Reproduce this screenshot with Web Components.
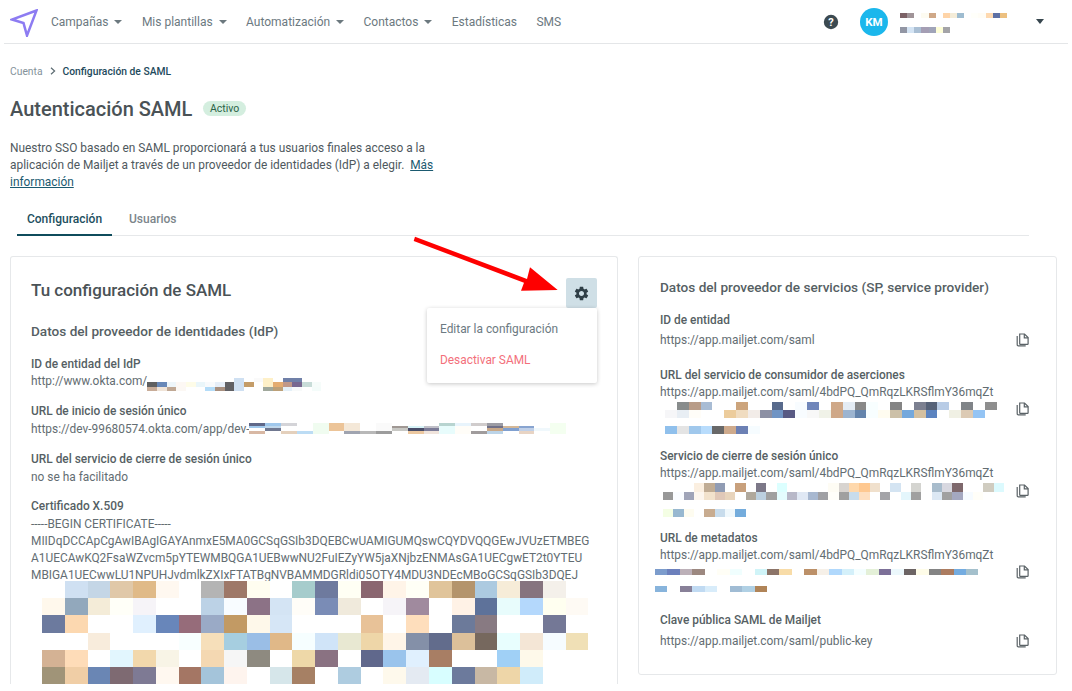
<!DOCTYPE html>
<html lang="es"><head><meta charset="utf-8"><title>SAML</title>
<style>
html,body{margin:0;padding:0;background:#fff;}
body{width:1072px;height:691px;overflow:hidden;font-family:Roboto,"Liberation Sans",sans-serif;}
app-shell{width:1064px;margin-left:4px;}
</style></head><body>
<app-shell>
  <top-nav></top-nav>
  <page-head></page-head>
  <config-card slot="left"></config-card>
  <provider-card slot="right"></provider-card>
</app-shell>
<script>
function def(name,css,html){
  customElements.define(name,class extends HTMLElement{
    connectedCallback(){
      if(this.shadowRoot)return;
      const r=this.attachShadow({mode:'open'});
      r.innerHTML='<style>'+css+'</style>'+(typeof html==='function'?html(this):html);
    }
  });
}
/* Redaction mosaic: rows of colour cells */
customElements.define('pixel-strip',class extends HTMLElement{
  connectedCallback(){
    if(this.shadowRoot)return;
    const r=this.attachShadow({mode:'open'});
    const cw=this.getAttribute('cw'),rh=this.getAttribute('rh');
    const rows=this.getAttribute('data-rows').trim().split('|').map(s=>s.trim().split(/\s+/));
    const n=Math.max(...rows.map(x=>x.length));
    let cells='';
    rows.forEach(row=>{for(let i=0;i<n;i++){const c=row[i]||'fff';cells+='<i style="background:#'+c+'"></i>';}});
    r.innerHTML='<style>:host{display:grid;flex:none;width:max-content;grid-template-columns:repeat('+n+','+cw+'px);grid-auto-rows:'+rh+'px}i{display:block}</style>'+cells;
  }
});
def('copy-icon',':host{display:block;width:14px;height:14px;flex:none}svg{display:block}',
 `<svg width="14" height="14" viewBox="0 0 14 14" fill="none" stroke="#5a6266" stroke-width="1.2"><path d="M1.2 3v8.8a1.1 1.1 0 0 0 1.1 1.1h7.4"/><path d="M3.7 1h4.8l3.6 3.6v6.2a.6.6 0 0 1-.6.6H4.3a.6.6 0 0 1-.6-.6z"/><path d="M8.3 1v3.8h3.8"/></svg>`);
def('nav-item',`:host{display:inline-flex;align-items:center;gap:6px;font-size:12px;color:#6c797f}
 .c{width:0;height:0;border:4px solid transparent;border-top:4.5px solid #6c797f;border-bottom:0}`,
 el=>'<slot></slot>'+(el.hasAttribute('caret')?'<span class="c"></span>':''));
def('top-nav',`:host{display:flex;align-items:center;height:43px;border-bottom:1px solid #e4e6e8;position:relative}
 .logo{margin:2px 0 0 6px;width:28px;height:28px;display:block;flex:none}
 nav{display:flex;margin-left:13px;gap:19.4px}
 .sp{flex:1}
 .help{display:block;margin-right:21px}
 .av{width:28px;height:28px;border-radius:50%;background:#1bb7ec;color:#fff;font:700 11.5px Roboto,sans-serif;display:flex;align-items:center;justify-content:center;margin-right:12px}
 .user{display:flex;flex-direction:column;gap:9px;width:136px;margin-top:3px}
 .car{width:0;height:0;border:4px solid transparent;border-top:5px solid #37464e;border-bottom:0;margin-right:24px}`,
 `<svg class="logo" viewBox="0 0 28 28" fill="none" stroke="#8d7cf2" stroke-width="2.5" stroke-linejoin="miter" stroke-miterlimit="8"><path d="M26.5 1.5 2 10.5l11.5 3.6L17 26.5z"/></svg>
 <nav><nav-item caret>Campañas</nav-item><nav-item caret>Mis plantillas</nav-item><nav-item caret>Automatización</nav-item><nav-item caret>Contactos</nav-item><nav-item>Estadísticas</nav-item><nav-item>SMS</nav-item></nav>
 <span class="sp"></span>
 <svg class="help" width="16" height="16" viewBox="0 0 16 16"><circle cx="8" cy="8" r="7.2" fill="#3c4a51"/><text x="8" y="12" text-anchor="middle" font-family="Roboto,sans-serif" font-weight="700" font-size="11" fill="#fff">?</text></svg>
 <div class="av">KM</div>
 <div class="user">
 <pixel-strip cw="7.13" rh="5" data-rows="7c6266 a09498 fff fdfbf1 cfa888 fff fed4a8 f4ecd8 9ebcd0 fff fffffa fffdf6 fed9b0 5e70a4 ecc080"></pixel-strip>
 <pixel-strip cw="7.13" rh="6" data-rows="9296a4 d4e4f4 aabfd4 a49eb4 a0a4b8 fefed8 a4a4a8"></pixel-strip>
 </div>
 <span class="car"></span>`);
def('page-head',`:host{display:block;padding:0 0 0 6px}
 .bc{display:flex;align-items:center;gap:7px;font-size:10.3px;margin-top:20px;height:14px;color:#84929a}
 .bc b{font-weight:500;color:#1d4a5c}
 .bc svg{display:block}
 h1{display:flex;align-items:center;margin:17px 0 0;height:28px;font-size:20px;font-weight:500;color:#4a5256}
 .badge{margin:-1px 0 0 11px;background:#d4eedf;color:#2b6347;font-size:10.5px;font-weight:400;border-radius:8px;padding:0 6.5px;height:15px;line-height:15px}
 p{margin:16.5px 0 0;width:440px;font-size:11.9px;line-height:17px;color:#4f595e}
 a{color:#1b5a70;text-decoration:underline;display:inline-block}
 .tabs{display:flex;margin:13.5px 0 0 7px;width:1012px;border-bottom:1px solid #e6e8ea;height:31px;font-size:12px}
 .t{padding:0 10px;height:30px;display:flex;align-items:center;justify-content:center;color:#7c868b;font-weight:500;margin-right:7px}
 .t.on{color:#1d4f60;border-bottom:2px solid #0f4c5c;width:75px}`,
 `<div class="bc"><span>Cuenta</span><svg width="6" height="8" viewBox="0 0 6 8" fill="none" stroke="#5c6b72" stroke-width="1.2"><path d="M1 .8 4.6 4 1 7.2"/></svg><b>Configuración de SAML</b></div>
 <h1>Autenticación SAML<span class="badge">Activo</span></h1>
 <p>Nuestro SSO basado en SAML proporcionará a tus usuarios finales acceso a la aplicación de Mailjet a través de un proveedor de identidades (IdP) a elegir.&nbsp; <a>Más</a> <a>información</a></p>
 <div class="tabs"><div class="t on">Configuración</div><div class="t">Usuarios</div></div>`);
def('info-field',`:host{display:block;font-size:11.9px;line-height:17px;color:#636d72}
 .l{font-weight:500;color:#565f64;display:block}`,
 el=>`<span class="l">${el.getAttribute('label')}</span><slot></slot>`);
def('config-card',`:host{display:block;position:relative;box-sizing:border-box;width:608px;height:428px;border:1px solid #e6e8ea;border-bottom:0;border-radius:3px 3px 0 0;padding:21px 20px 0 20px;flex:none}
 .head{display:flex;justify-content:space-between;align-items:flex-start;height:30px}
 h2{margin:0;font-size:17px;line-height:24px;font-weight:500;color:#4a5256}
 .gear{width:31px;height:30px;background:#cfdfe6;border-radius:2px;display:flex;align-items:center;justify-content:center}
 h3{margin:14px 0 0;font-size:13.6px;line-height:18px;font-weight:500;color:#565f64}
 h3+info-field{margin-top:16px}
 .row{display:flex;height:17px}
 .cert{white-space:pre;margin-top:1px}
 .menu{position:absolute;left:416px;top:51px;width:170px;height:75px;background:#fff;border-radius:2px;box-shadow:0 1px 4px rgba(0,0,0,.22);z-index:2;font-size:11.9px;box-sizing:border-box;padding:13px;display:flex;flex-direction:column;gap:14px}
 .menu div{line-height:17px;color:#6c7a82}
 .menu .d{color:#f3707b}
 .mosaic{margin:-3px 0 0 11px}`,
 `<div class="head"><h2>Tu configuración de SAML</h2>
  <div class="gear"><svg width="17" height="17" viewBox="0 0 24 24" fill="#2f3e46"><path d="M19.14 12.94c.04-.3.06-.61.06-.94 0-.32-.02-.64-.07-.94l2.03-1.58c.18-.14.23-.41.12-.61l-1.92-3.32c-.12-.22-.37-.29-.59-.22l-2.39.96c-.5-.38-1.03-.7-1.62-.94l-.36-2.54c-.04-.24-.24-.41-.48-.41h-3.84c-.24 0-.43.17-.47.41l-.36 2.54c-.59.24-1.13.57-1.62.94l-2.39-.96c-.22-.08-.47 0-.59.22L2.74 8.87c-.12.21-.08.47.12.61l2.03 1.58c-.05.3-.09.63-.09.94s.02.64.07.94l-2.03 1.58c-.18.14-.23.41-.12.61l1.92 3.32c.12.22.37.29.59.22l2.39-.96c.5.38 1.03.7 1.62.94l.36 2.54c.05.24.24.41.48.41h3.84c.24 0 .44-.17.47-.41l.36-2.54c.59-.24 1.13-.56 1.62-.94l2.39.96c.22.08.47 0 .59-.22l1.92-3.32c.12-.22.07-.47-.12-.61l-2.01-1.58zM12 15.6c-1.98 0-3.6-1.62-3.6-3.6s1.62-3.6 3.6-3.6 3.6 1.62 3.6 3.6-1.62 3.6-3.6 3.6z"/></svg></div></div>
 <div class="menu"><div>Editar la configuración</div><div class="d">Desactivar SAML</div></div>
 <h3>Datos del proveedor de identidades (IdP)</h3>
 <info-field label="ID de entidad del IdP"><div class="row">http://www.okta.com/<pixel-strip cw="9.68" rh="4.3" style="margin-top:5px" data-rows="fff fff fff fff fff fff fff fff fff cfe0f2 fff fafafa fef0c8 fff 7080a8 7080a8 fff fff|606060 6888b8 eef6fa fdf8f4 fefce8 eaf6fa f8fafc e6eef8 606064 cfe0f2 c49c68 fff fef0c8 e4ac70 c09888 786890 c8dcd8 f6fcfa|c8ac98 f0e4d8 c0a894 fcf8f4 fff fff b4dcf8 a89080 606064 cfe0f2 fff fff a0a89c bca078 e4f0f8 f8fafa fff f4fcfa"></pixel-strip></div></info-field>
 <info-field label="URL de inicio de sesión único" style="margin-top:13px"><div class="row" style="margin-top:1px">https://dev-99680574.okta.com/app/dev-<pixel-strip cw="15.83" rh="2.7" style="margin-top:2px" data-rows="606888 a0c8ec d4d4d8 fff f0fcf0 ecc498 f4e8d8 fff fafafa fff fff fff b8d4d0 e8f4fc d0cccc 9c9ca4 fff fff fff f4fff0|a0c8ec c0d8ec fff fff f0fcf0 ecc498 f4e8d8 fff fafafa a09894 d8f4f8 c0c0c8 e8fcfc fffdf8 fff 707088 d4b898 88a4d0 fff f4fff0|fff 707890 fff fff f0fcf0 ecc498 f4e8d8 fff fafafa c8c8c4 484c68 7c7c98 e8fcfc fffdf8 fff c8a888 80a0d0 c0d0e8 f0f8fc f4fff0|d8b8a4 fff e4d0bc bcdcf4 f0fcf0 fff a0a4b0 b8b8b8 9c9c9c fff ecc8a0 f0e4dc e8fcfc fffdf8 a09c9c bcd4e8 fff e8d4c4 fff f4fff0"></pixel-strip></div></info-field>
 <info-field label="URL del servicio de cierre de sesión único" style="margin-top:13px"><div style="margin-top:1px">no se ha facilitado</div></info-field>
 <info-field label="Certificado X.509" style="margin-top:12px"><div class="cert">-----BEGIN CERTIFICATE-----
MIIDqDCCApCgAwIBAgIGAYAnmxE5MA0GCSqGSIb3DQEBCwUAMIGUMQswCQYDVQQGEwJVUzETMBEG
A1UECAwKQ2FsaWZvcm5pYTEWMBQGA1UEBwwNU2FuIEZyYW5jaXNjbzENMAsGA1UECgwET2t0YTEU
MBIGA1UECwwLU1NPUHJvdmlkZXIxFTATBgNVBAMMDGRldi05OTY4MDU3NDEcMBoGCSqGSIb3DQEJ</div>
 <pixel-strip class="mosaic" cw="22.78" rh="17.2" data-rows="fff cfe0f2 c4d6e6 e0c8a8 e0ba88 fff8f0 fff b4b4b4 9e7868 fffdf0 fff a6cccc 6e7a9e fffff4 8a6670 fff4e8 fffff6 e0c49a b4946c accae0 f6ecd8 86747f f4f0ea fff|fff8ec 92a8bc f4ecd8 fffff8 f6f4f8 fff fff bcd2e6 f8fcff 8c7286 d4e4f4 fffdf8 7a8cb6 f0eadc fff f6f4f8 a08a9e fff fff2e6 5e729a e8fcfc b4d8fc fffff0 fefaf4|6c7a9e fcd8b0 fff fff e0f0fe 6886ba 966c7a 9aaac6 c29a64 fef8ea d6e6f6 fff fff fff e8c298 fff fedebc fff 6c7a9a 887a82 fff fff 747896 fff|fff fff f8ecdc fff fff fff f8ffff f6dfba a6cee0 9abee6 e0b888 f6feff d0e4f8 e8e8d2 eed6a8 fff5e8 8490a8 626c8c dcc09a 76685e e8fefe f4e6d6 f6fcff f0e0b6|d4b294 fedcb8 fff e2f6fe f2d8ac f8f4e6 fff f4d8b2 f6f6f6 8e8a80 fff eed8a8 8a7282 fff 60688c 9ac4ec e0f0fe a87e64 fff fff a0d0f6 fef9ea fff fff|a09478 f0cea6 6a86b4 7e6a72 7e7a94 fff8f0 a47664 a4c4da fef4ee fff d6e6ea a68064 fff aecce0 fff fef9ec e4eaf2 d8feff 6c7a9c c8b8a4 eed6a8 d0ecfa fff fff"></pixel-strip>
 </info-field>`);
def('provider-card',`:host{display:block;box-sizing:border-box;width:419px;height:419px;border:1px solid #e6e8ea;border-radius:3px;padding:21px 21px 0 21px;flex:none}
 h2{margin:0;font-size:13.6px;line-height:18px;font-weight:500;color:#565f64}
 .row{display:flex;justify-content:space-between;align-items:center;padding-right:5px}
 .txt{width:340px;white-space:nowrap}`,
 `<h2>Datos del proveedor de servicios (SP, service provider)</h2>
 <info-field label="ID de entidad" style="margin-top:16px"><div class="row" style="margin-top:3px"><div class="txt">https://app.mailjet.com/saml</div><copy-icon style="margin-top:-1px"></copy-icon></div></info-field>
 <info-field label="URL del servicio de consumidor de aserciones" style="margin-top:18px"><div class="row"><div class="txt">https://app.mailjet.com/saml/4bdPQ_QmRqzLKRSflmY36mqZt
 <pixel-strip cw="11.85" rh="8" style="margin:1px 0 0 5px" data-rows="fff 888c8c b89c88 a8bcd4 fff fff cca47c fff fff 586a8c fff f8fcff 7086ba fff cfa888 e4ecf4 888888 f8feff fff 848484 fff 7c8090 566278 b8cce6 fff 808488 fff 8e8e8e|f6f6f8 e8eef4 fffdf8 fff fff eccc9c f0dcc0 f2ece8 8c90a4 7094c4 585a84 f8fcff f8f8f8 f0f2e8 cfa888 9cb4d0 6484ac f8feff fffcf0 ccc0a8 74a8dc d4c0a0 5c84c0 fff f0f0e4 dccab4 94c4f4"></pixel-strip>
 <pixel-strip cw="11.85" rh="8" style="margin:8px 0 0 5px" data-rows="90c0ec e4e4e4 a0c8ec b8dcfc 686868 ceaa8c 6c80b4 f6fcff"></pixel-strip></div><copy-icon style="margin-top:-1px"></copy-icon></div></info-field>
 <info-field label="Servicio de cierre de sesión único" style="margin-top:14px"><div class="row"><div class="txt">https://app.mailjet.com/saml/4bdPQ_QmRqzLKRSflmY36mqZt
 <pixel-strip cw="10.33" rh="8.5" style="margin:1px 0 0 3px" data-rows="fff fff fff fbefe0 c0ac94 909cb4 fff c8a07c fff 7c7888 fff dcffff fff fff fff fff fefcf4 d8d4d0 fed8ac fec890 f0e0cc fff d4e4f2 fff d4d4d0 fff a8bccc d8d8e0 7e686c fff fff d0ccc0 dcfafe|989898 fafcff a0a4b8 fdf6ee f2e2cc e0c8b8 e8d4bc fff b0a89c bcd0e0 a0a0a0 e4fcfe b8b8c8 e0e8f4 a8b8d0 a0a0a4 fffefa a0a0a0 c8dcec fedfc0 fff a4a4a8 fff e4f6fc a0a0a0 fff dce8f4 a0a0a0 a4a8c0 f6fbff fffef8"></pixel-strip>
 <pixel-strip cw="10.33" rh="8" style="margin:9px 0 0 3px" data-rows="f4fee4 98b8d0 fefcf0 fff c8ac90 c8dcec f0f8fc 74acdc"></pixel-strip></div><copy-icon style="margin-top:-1px"></copy-icon></div></info-field>
 <info-field label="URL de metadatos" style="margin-top:13px"><div class="row"><div class="txt">https://app.mailjet.com/saml/4bdPQ_QmRqzLKRSflmY36mqZt
 <pixel-strip cw="12.44" rh="6" style="margin:5px 0 0 -5px" data-rows="7c9ccc 6c80bc bcb0b8 9c8880 fff fffef6 f0fefe fff d0f4f8 8c7468 f8dca8 fff bc9068 f6f0e8 b0d8fc d4f0fa f4feff e4f0d8 7c7098 ecf8fc 6c6464 fefce8 848484 ac7c60 74ace0 a4c0cc"></pixel-strip>
 <pixel-strip cw="12.44" rh="6" style="margin:11px 0 0 -5px" data-rows="88b4dc fff 888098 c0daf2 d8ecfa fff a0bcd4 b0d0e4 b08458"></pixel-strip></div><copy-icon style="margin-top:5px"></copy-icon></div></info-field>
 <info-field label="Clave pública SAML de Mailjet" style="margin-top:20px"><div class="row" style="margin-top:4px"><div class="txt">https://app.mailjet.com/saml/public-key</div><copy-icon style="margin-top:-2px"></copy-icon></div></info-field>`);
def('red-arrow',':host{position:absolute;left:0;top:0;width:1072px;height:691px;pointer-events:none;z-index:5}svg{display:block}',
 `<svg width="1072" height="691" viewBox="4 0 1072 691"><polygon fill="#fe0000" points="415,236.7 413.7,241 524,282.7 521,290.7 557.7,290 530,267.3 527,279"/></svg>`);
def('app-shell',`:host{display:block;position:relative}
 .cards{display:flex;gap:20px;margin:20px 0 0 6px;align-items:flex-start}`,
 `<slot></slot><div class="cards"><slot name="left"></slot><slot name="right"></slot></div><red-arrow></red-arrow>`);
</script>
</body></html>
